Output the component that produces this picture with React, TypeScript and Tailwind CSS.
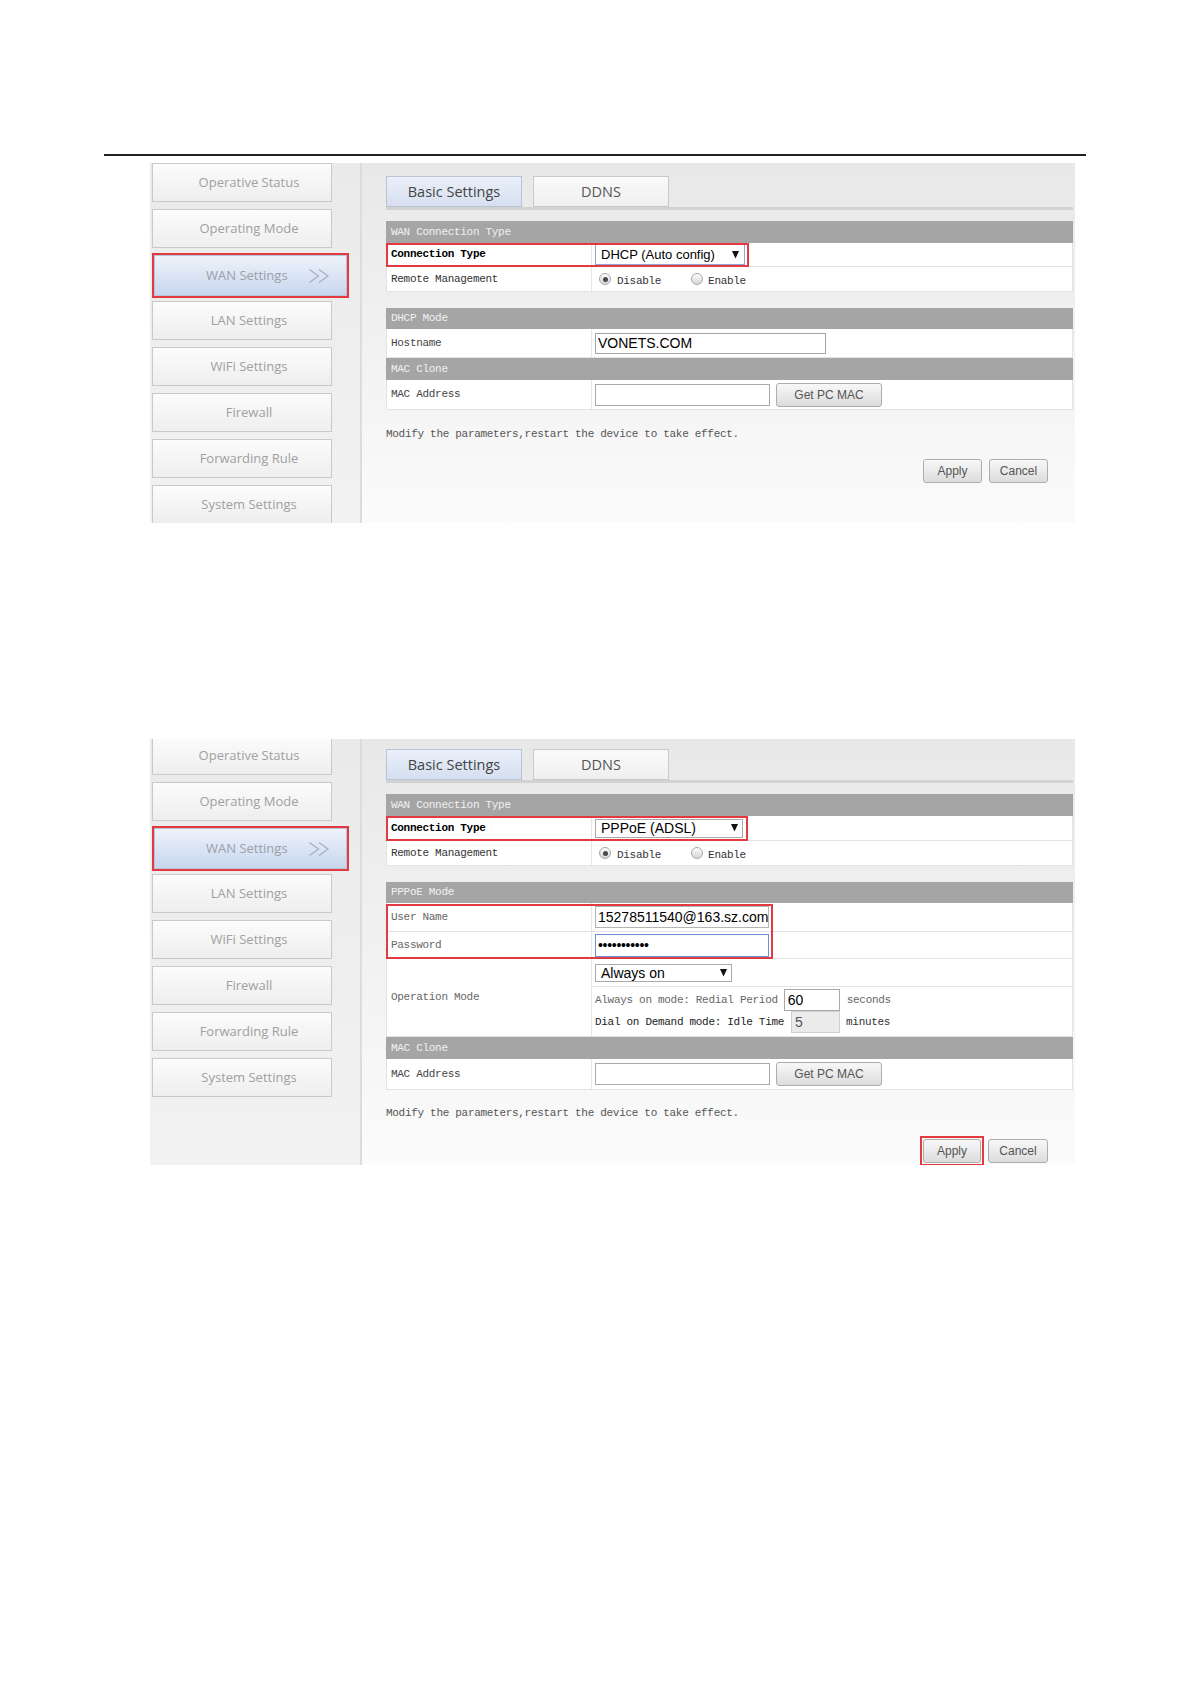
import React from 'react';

const NAV = [
  'Operative Status',
  'Operating Mode',
  'WAN Settings',
  'LAN Settings',
  'WiFi Settings',
  'Firewall',
  'Forwarding Rule',
  'System Settings',
];

function Chevrons() {
  return (
    <svg width="24" height="16" viewBox="0 0 24 16" fill="none" stroke="#a7aebd" strokeWidth="1.2">
      <path d="M1.5 1.5 L10.5 8 L1.5 14.5" />
      <path d="M11 1.5 L20 8 L11 14.5" />
    </svg>
  );
}

function Sidebar({ shift }: { shift: string }) {
  return (
    <div className="w-[212px] shrink-0 h-full overflow-hidden bg-linear-to-b from-[#eaeaea] to-[#f2f2f2] border-r-2 border-[#dcdcdc] font-['Open_Sans',sans-serif] text-[13px]">
      <div className={'flex flex-col gap-[7px] pl-[2px] ' + shift}>
        {NAV.map((n) =>
          n === 'WAN Settings' ? (
            <div key={n} className="-mt-[2px] -mb-[4px] h-[45px] w-[197px] border-2 border-[#e23a40] relative z-10">
              <div className="h-full flex items-center gap-[20px] pl-[51px] border border-[#b8c4d9] bg-linear-to-b from-[#eef3fb] to-[#c8d6ee] text-[#9a9fa8]">
                <span>WAN Settings</span>
                <Chevrons />
              </div>
            </div>
          ) : (
            <div
              key={n}
              className="h-[39px] w-[180px] shrink-0 flex items-center justify-center pl-[14px] border border-[#c9c9c9] bg-linear-to-b from-[#fcfcfc] to-[#eeeeee] text-[#a0a0a0]"
            >
              {n}
            </div>
          )
        )}
      </div>
    </div>
  );
}

function Tabs() {
  return (
    <div>
      <div className="flex gap-[11px] font-['Open_Sans',sans-serif] text-[14.5px]">
        <div className="w-[136px] h-[31px] flex items-center justify-center border border-[#b9c3d4] bg-linear-to-b from-[#eaf0fa] to-[#d6dff0] text-[#444]">
          Basic Settings
        </div>
        <div className="w-[136px] h-[31px] flex items-center justify-center border border-[#c9c9c9] bg-linear-to-b from-[#fafafa] to-[#efefef] text-[#555]">
          DDNS
        </div>
      </div>
      <div className="h-[3px] bg-[#d2d2d2]" />
    </div>
  );
}

function Head({ cls, children }: { cls: string; children: React.ReactNode }) {
  return <div className={'bg-[#a5a5a5] text-[#f1f1f1] pl-[5px] flex items-center ' + cls}>{children}</div>;
}

function Row({
  label,
  cls,
  labelCls = 'text-[#333]',
  children,
}: {
  label: string;
  cls: string;
  labelCls?: string;
  children?: React.ReactNode;
}) {
  return (
    <div className={'flex bg-white border-x border-b border-[#e3e3e3] ' + cls}>
      <div className={'w-[205px] shrink-0 pl-[4px] flex items-center border-r border-[#e6e6e6] ' + labelCls}>{label}</div>
      <div className="flex-1 pl-[3px] flex items-center">{children}</div>
    </div>
  );
}

function Arrow() {
  return (
    <svg width="7" height="8" viewBox="0 0 7 8">
      <polygon points="0,0 7,0 3.5,7.5" fill="#111" />
    </svg>
  );
}

function Radio({ checked }: { checked?: boolean }) {
  return (
    <span className="w-[12px] h-[12px] rounded-full border border-[#a8a8a8] bg-linear-to-b from-[#fdfdfd] to-[#d6d6d6] flex items-center justify-center">
      {checked && <span className="w-[5px] h-[5px] rounded-full bg-[#4a4a4a]" />}
    </span>
  );
}

function RemoteRadios() {
  return (
    <div className="flex items-center ml-[4px]">
      <Radio checked />
      <span className="ml-[6px] pt-[4px] text-[#333]">Disable</span>
      <span className="ml-[30px]">
        <Radio />
      </span>
      <span className="ml-[5px] pt-[4px] text-[#333]">Enable</span>
    </div>
  );
}

function Btn({ cls, children }: { cls: string; children: React.ReactNode }) {
  return (
    <button
      className={
        "flex items-center justify-center rounded-[3px] border border-[#adadad] bg-linear-to-b from-[#f8f8f8] to-[#dcdcdc] text-[12px] text-[#555] font-['Liberation_Sans',Arial,sans-serif] tracking-normal " +
        cls
      }
    >
      {children}
    </button>
  );
}

function MacRow({ cls }: { cls: string }) {
  return (
    <Row label="MAC Address" cls={cls} labelCls="text-[#444]">
      <input
        readOnly
        value=""
        className="w-[175px] h-[22px] border border-[#a9a9a9] bg-white outline-none"
      />
      <Btn cls="ml-[6px] w-[106px] h-[24px] text-[12.5px]">Get PC MAC</Btn>
    </Row>
  );
}

function Note({ cls }: { cls: string }) {
  return (
    <div className={'h-[12px] leading-[12px] text-[#555] ' + cls}>
      Modify the parameters,restart the device to take effect.
    </div>
  );
}

function ShotDhcp() {
  return (
    <div className="flex h-[360px] w-[925px]">
      <Sidebar shift="mt-0" />
      <div className="w-[713px] h-full overflow-hidden bg-linear-to-b from-[#e8e8e8] to-[#fbfbfb] pl-[24px] pr-[2px] pt-[13px]">
        <Tabs />
        <div className="mt-[11px] font-['Liberation_Mono',monospace] text-[11px] tracking-[-0.3px]">
          <Head cls="h-[22px]">WAN Connection Type</Head>
          <Row label="Connection Type" cls="h-[24px] relative" labelCls="font-bold text-black">
            <div className="w-[150px] h-[21px] border border-[#8fa6d4] bg-white flex items-center justify-between pl-[5px] pr-[5px] text-[13px] tracking-normal text-black font-['Liberation_Sans',Arial,sans-serif]">
              <span>DHCP (Auto config)</span>
              <Arrow />
            </div>
            <div className="absolute -left-px top-0 -bottom-px w-[363px] border-2 border-[#e23a40]" />
          </Row>
          <Row label="Remote Management" cls="h-[25px]">
            <RemoteRadios />
          </Row>
          <Head cls="h-[21px] mt-[16px]">DHCP Mode</Head>
          <Row label="Hostname" cls="h-[29px]" labelCls="text-[#444]">
            <input
              readOnly
              value="VONETS.COM"
              className="w-[231px] h-[21px] border border-[#a6a6a6] bg-white pl-[2px] text-[14px] tracking-normal text-black font-['Liberation_Sans',Arial,sans-serif] outline-none"
            />
          </Row>
          <Head cls="h-[22px]">MAC Clone</Head>
          <MacRow cls="h-[30px]" />
          <Note cls="mt-[18px]" />
          <div className="mt-[19px] flex justify-end gap-[7px] pr-[25px]">
            <Btn cls="w-[59px] h-[24px]">Apply</Btn>
            <Btn cls="w-[59px] h-[24px]">Cancel</Btn>
          </div>
        </div>
      </div>
    </div>
  );
}

function ShotPppoe() {
  return (
    <div className="flex h-[426px] w-[925px]">
      <Sidebar shift="-mt-[3px]" />
      <div className="w-[713px] h-full overflow-hidden bg-linear-to-b from-[#e8e8e8] to-[#fbfbfb] pl-[24px] pr-[2px] pt-[10px]">
        <Tabs />
        <div className="mt-[11px] font-['Liberation_Mono',monospace] text-[11px] tracking-[-0.3px]">
          <Head cls="h-[22px]">WAN Connection Type</Head>
          <Row label="Connection Type" cls="h-[25px] relative" labelCls="font-bold text-black">
            <div className="w-[148px] h-[19px] border border-[#a9a9a9] bg-white flex items-center justify-between pl-[5px] pr-[4px] text-[14px] tracking-normal text-black font-['Liberation_Sans',Arial,sans-serif]">
              <span>PPPoE (ADSL)</span>
              <Arrow />
            </div>
            <div className="absolute -left-px top-0 -bottom-px w-[362px] border-2 border-[#e23a40]" />
          </Row>
          <Row label="Remote Management" cls="h-[25px]">
            <RemoteRadios />
          </Row>
          <Head cls="h-[21px] mt-[16px]">PPPoE Mode</Head>
          <div className="relative">
            <Row label="User Name" cls="h-[29px]" labelCls="text-[#666]">
              <input
                readOnly
                value="15278511540@163.sz.com"
                className="w-[174px] h-[22px] border border-[#b5b5b5] bg-white pl-[2px] text-[14px] tracking-normal text-black font-['Liberation_Sans',Arial,sans-serif] outline-none"
              />
            </Row>
            <Row label="Password" cls="h-[27px]" labelCls="text-[#666]">
              <div className="w-[174px] h-[23px] border border-[#6f8fd6] bg-white pl-[2px] flex items-center text-[14px] tracking-[-0.3px] text-black font-['Liberation_Sans',Arial,sans-serif]">
                •••••••••••
              </div>
            </Row>
            <div className="absolute left-0 top-[1px] w-[387px] h-[55px] border-2 border-[#e23a40]" />
          </div>
          <div className="flex h-[78px] bg-white border-x border-b border-[#e3e3e3]">
            <div className="w-[205px] shrink-0 pl-[4px] flex items-center border-r border-[#e6e6e6] text-[#666]">
              Operation Mode
            </div>
            <div className="flex-1 flex flex-col">
              <div className="h-[28px] border-b border-[#e6e6e6] pl-[3px] pt-[5px]">
                <div className="w-[137px] h-[18px] border border-[#a9a9a9] bg-white flex items-center justify-between pl-[5px] pr-[4px] text-[14px] tracking-normal text-black font-['Liberation_Sans',Arial,sans-serif]">
                  <span>Always on</span>
                  <Arrow />
                </div>
              </div>
              <div className="mt-[2px] pl-[3px] flex items-center h-[22px]">
                <span className="text-[#666]">Always on mode: Redial Period</span>
                <input
                  readOnly
                  value="60"
                  className="ml-[6px] w-[56px] h-[22px] border border-[#a9a9a9] bg-white pl-[3px] text-[14px] tracking-normal text-black font-['Liberation_Sans',Arial,sans-serif] outline-none"
                />
                <span className="ml-[7px] text-[#666]">seconds</span>
              </div>
              <div className="pl-[3px] flex items-center h-[22px]">
                <span className="text-[#222]">Dial on Demand mode: Idle Time</span>
                <input
                  readOnly
                  value="5"
                  className="ml-[7px] w-[49px] h-[22px] border border-[#cfcfcf] bg-[#ebebeb] pl-[3px] text-[14px] tracking-normal text-[#555] font-['Liberation_Sans',Arial,sans-serif] outline-none"
                />
                <span className="ml-[6px] text-[#333]">minutes</span>
              </div>
            </div>
          </div>
          <Head cls="h-[22px]">MAC Clone</Head>
          <MacRow cls="h-[31px]" />
          <Note cls="mt-[17px]" />
          <div className="mt-[20px] flex justify-end items-center gap-[4px] pr-[25px]">
            <div className="-my-[3px] p-px border-2 border-[#e23a40]">
              <Btn cls="w-[58px] h-[24px]">Apply</Btn>
            </div>
            <Btn cls="w-[60px] h-[24px]">Cancel</Btn>
          </div>
        </div>
      </div>
    </div>
  );
}

export default function App() {
  return (
    <div className="w-[1191px] min-h-[1684px] bg-white">
      <div className="pt-[154px] pl-[104px]">
        <div className="w-[982px] h-[2px] bg-[#222]" />
      </div>
      <div className="pl-[150px] pt-[7px]">
        <ShotDhcp />
      </div>
      <div className="pl-[150px] pt-[216px]">
        <ShotPppoe />
      </div>
    </div>
  );
}
